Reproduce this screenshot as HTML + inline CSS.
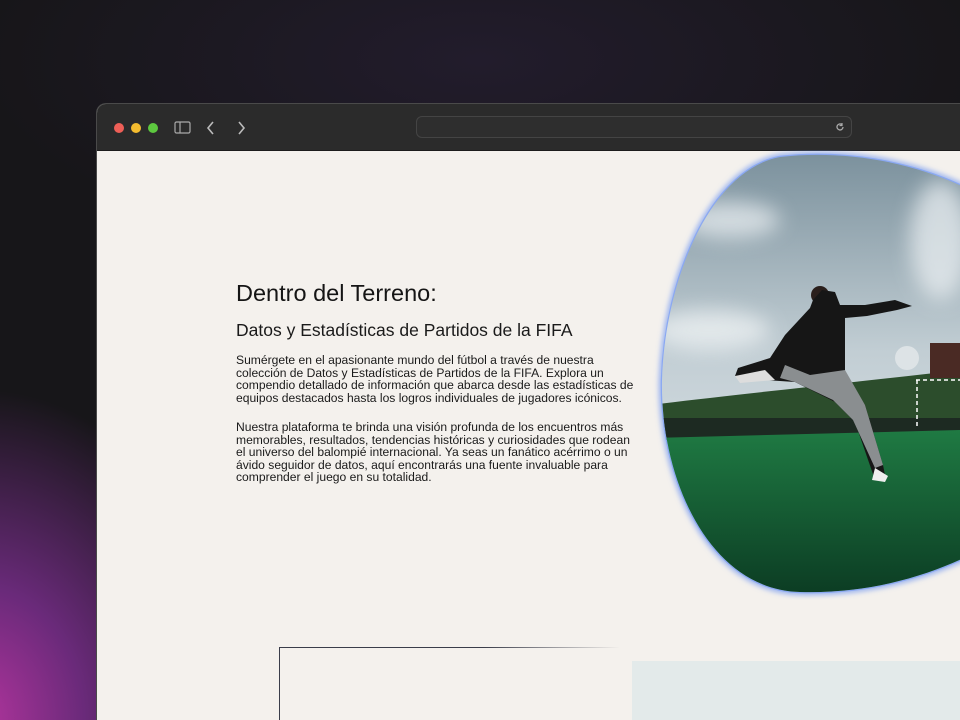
<!DOCTYPE html>
<html><head><meta charset="utf-8"><style>
*{margin:0;padding:0;box-sizing:border-box}
html,body{width:960px;height:720px;overflow:hidden}
body{position:relative;font-family:"Liberation Sans",sans-serif;
background:radial-gradient(ellipse 260px 330px at -20px 720px,#b0349c 0%,#6a2a7a 40%,rgba(40,20,50,0) 100%),radial-gradient(ellipse 500px 200px at 480px 60px,#221c2c,rgba(0,0,0,0)),#171619;}
.win{position:absolute;left:96px;top:103px;width:864px;height:617px;border-radius:10px 0 0 0;overflow:hidden;background:#f4f1ed;border:1px solid #4a4a4a;border-bottom:none;border-right:none}
.bar{height:47px;background:#2b2b2b;position:relative;border-bottom:1px solid #1c1c1c}
.dot{position:absolute;top:19px;width:10px;height:10px;border-radius:50%}
.url{position:absolute;left:319px;top:12px;width:436px;height:22px;border:1px solid #444;border-radius:6px;background:#2e2e2e}
.t1{position:absolute;left:139px;top:176px;font-size:23.5px;color:#151515}
.t2{position:absolute;left:139px;top:216px;font-size:17.5px;color:#1a1a1a}
.p{position:absolute;left:139px;font-size:12.1px;line-height:12.6px;color:#1a1a1a;white-space:nowrap}
</style></head><body>
<div class="win">
<div class="bar">
<div class="dot" style="left:17px;background:#ee5f57"></div>
<div class="dot" style="left:34px;background:#f4bc2f"></div>
<div class="dot" style="left:51px;background:#5dc83f"></div>
<svg style="position:absolute;left:77px;top:17px" width="18" height="14"><rect x="1" y="1" width="15" height="11" rx="1.5" fill="none" stroke="#aaa" stroke-width="1.2"/><line x1="6" y1="1" x2="6" y2="12" stroke="#aaa" stroke-width="1.2"/></svg>
<svg style="position:absolute;left:108px;top:16px" width="12" height="16"><path d="M8 2 L3 8 L8 14" fill="none" stroke="#bbb" stroke-width="1.6"/></svg>
<svg style="position:absolute;left:138px;top:16px" width="12" height="16"><path d="M4 2 L9 8 L4 14" fill="none" stroke="#bbb" stroke-width="1.6"/></svg>
<div class="url"><svg style="position:absolute;right:6px;top:5px" width="10" height="10"><path d="M8 5a3 3 0 1 1-1-2.3" fill="none" stroke="#aaa" stroke-width="1.3"/><path d="M7 1v2.5h-2.5" fill="none" stroke="#aaa" stroke-width="1.2"/></svg></div>
</div>
<div class="t1">Dentro del Terreno:</div>
<div class="t2">Datos y Estadísticas de Partidos de la FIFA</div>
<div class="p" style="top:250px">Sumérgete en el apasionante mundo del fútbol a través de nuestra<br>colección de Datos y Estadísticas de Partidos de la FIFA. Explora un<br>compendio detallado de información que abarca desde las estadísticas de<br>equipos destacados hasta los logros individuales de jugadores icónicos.</div>
<div class="p" style="top:317px">Nuestra plataforma te brinda una visión profunda de los encuentros más<br>memorables, resultados, tendencias históricas y curiosidades que rodean<br>el universo del balompié internacional. Ya seas un fanático acérrimo o un<br>ávido seguidor de datos, aquí encontrarás una fuente invaluable para<br>comprender el juego en su totalidad.</div>
<div style="position:absolute;left:182px;top:543px;width:340px;height:74px;border-left:1.5px solid #3a3d4a;border-top:1.5px solid #3a3d4a;border-image:linear-gradient(90deg,#3a3d4a,#3a3d4a 60%,rgba(0,0,0,0)) 1"></div>
<div style="position:absolute;left:535px;top:557px;width:329px;height:60px;background:#e3eaea"></div>
<svg style="position:absolute;left:553px;top:46px" width="311" height="450">
<defs>
<clipPath id="c"><path d="M130,7 C60,20 15,130 12,230 C10,330 60,440 150,442 C220,444 280,425 320,405 L320,40 C260,10 190,0 130,7Z"/></clipPath>
<linearGradient id="s" x1="0" y1="0" x2="0" y2="1"><stop offset="0" stop-color="#7a909c"/><stop offset="0.45" stop-color="#c2ced4"/><stop offset="1" stop-color="#e6ebee"/></linearGradient>
<linearGradient id="g" x1="0" y1="0" x2="0" y2="1"><stop offset="0" stop-color="#1f7a43"/><stop offset="1" stop-color="#0b3a22"/></linearGradient>
<filter id="b"><feGaussianBlur stdDeviation="10"/></filter>
<filter id="b2"><feGaussianBlur stdDeviation="3"/></filter>
</defs>
<path d="M130,7 C60,20 15,130 12,230 C10,330 60,440 150,442 C220,444 280,425 320,405 L320,40 C260,10 190,0 130,7Z" fill="none" stroke="#7fa0f0" stroke-width="5" filter="url(#b2)"/>
<path d="M130,7 C60,20 15,130 12,230 C10,330 60,440 150,442 C220,444 280,425 320,405 L320,40 C260,10 190,0 130,7Z" fill="none" stroke="#8aa8f2" stroke-width="2.5"/>
<g clip-path="url(#c)">
<rect width="311" height="450" fill="url(#s)"/>
<g filter="url(#b)" opacity=".7">
<ellipse cx="80" cy="70" rx="50" ry="18" fill="#eef2f4"/>
<ellipse cx="290" cy="90" rx="30" ry="60" fill="#eef2f4"/>
<ellipse cx="60" cy="180" rx="60" ry="20" fill="#f2f5f6"/>
</g>
<path d="M0,255 C80,245 180,235 311,220 L311,285 L0,290Z" fill="#2c4d2c"/>
<rect x="0" y="268" width="311" height="22" fill="#1d2a22"/>
<path d="M0,288 L311,280 L311,450 L0,450Z" fill="url(#g)"/>
<rect x="280" y="193" width="31" height="35" fill="#4a2a24"/>
<path d="M266,230 H311 M267,230 V278" stroke="#fff" stroke-width="1.5" stroke-dasharray="4 3"/>
<circle cx="257" cy="208" r="12" fill="#dde3e6"/>
<circle cx="170" cy="145" r="9" fill="#2a1f1c"/>
<path d="M163,150 L172,140 L185,142 L190,155 L215,155 L245,150 L262,156 L247,160 L217,166 L195,168 L195,225 L215,255 L233,315 L235,325 L225,330 L205,272 L185,252 L145,232 L115,230 L85,226 L88,218 L120,208 L135,185 L160,158Z" fill="#161616"/>
<path d="M195,220 L215,255 L233,315 L225,318 L203,270 L183,250 L145,232 L130,228 L135,215 L160,225Z" fill="#8a8e90"/>
<path d="M85,226 L115,220 L125,230 L90,233Z" fill="#ddd"/>
<path d="M225,318 L238,326 L235,332 L222,330Z" fill="#eee"/>
</g>
</svg>
</div>
</body></html>
